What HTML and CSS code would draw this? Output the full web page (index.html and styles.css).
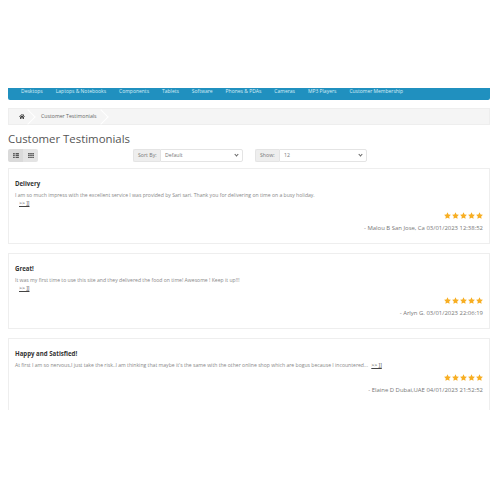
FILE: index.html
```html
<!DOCTYPE html>
<html lang="en">
<head>
    <meta charset="UTF-8">
    <title>Customer Testimonials</title>
    <link rel="stylesheet" href="styles.css">
</head>
<body>

<svg width="0" height="0" class="defs">
    <symbol id="star" viewBox="0 0 20 19">
        <path d="M10 0.5 L13 6.6 L19.7 7.5 L14.8 12.2 L16 18.8 L10 15.6 L4 18.8 L5.2 12.2 L0.3 7.5 L7 6.6 Z"/>
    </symbol>
</svg>

<div id="page">
    <div id="menu">
        <a href="#">Desktops</a>
        <a href="#">Laptops &amp; Notebooks</a>
        <a href="#">Components</a>
        <a href="#">Tablets</a>
        <a href="#">Software</a>
        <a href="#">Phones &amp; PDAs</a>
        <a href="#">Cameras</a>
        <a href="#">MP3 Players</a>
        <a href="#">Customer Membership</a>
    </div>

    <div id="breadcrumb">
        <a href="#" class="crumb crumb-home">
            <svg width="6" height="5" viewBox="0 0 14 12"><path fill="#333" d="M7 0 L9.5 2.2 V1 H11.5 V4 L14 6.2 L13 7.2 L7 2 L1 7.2 L0 6.2 Z M2.5 7.4 L7 3.5 L11.5 7.4 V12 H8.5 V8.5 H5.5 V12 H2.5 Z"/></svg>
        </a>
        <a href="#" class="crumb">Customer Testimonials</a>
    </div>

    <h1 id="title">Customer Testimonials</h1>

    <div id="toolbar">
        <div class="view-buttons">
            <button class="view-button">
                <svg width="6" height="5" viewBox="0 0 7 6"><path fill="#555" d="M0 0H2V1.5H0ZM3 0H7V1.5H3ZM0 2.2H2V3.7H0ZM3 2.2H7V3.7H3ZM0 4.4H2V5.9H0ZM3 4.4H7V5.9H3Z"/></svg>
            </button>
            <button class="view-button">
                <svg width="6" height="5" viewBox="0 0 7 6"><path fill="#555" d="M0 0H2V1.5H0ZM2.5 0H4.5V1.5H2.5ZM5 0H7V1.5H5ZM0 2.2H2V3.7H0ZM2.5 2.2H4.5V3.7H2.5ZM5 2.2H7V3.7H5ZM0 4.4H2V5.9H0ZM2.5 4.4H4.5V5.9H2.5ZM5 4.4H7V5.9H5Z"/></svg>
            </button>
        </div>
        <div class="input-group sort-group">
            <span class="input-label">Sort By:</span>
            <span class="input-select">Default <i class="chevron"></i></span>
        </div>
        <div class="input-group show-group">
            <span class="input-label">Show:</span>
            <span class="input-select">12 <i class="chevron"></i></span>
        </div>
    </div>

    <div id="reviews">
        <div class="review">
            <h4>Delivery</h4>
            <p>I am so much impress with the excellent service I was provided by Sari sari. Thank you for delivering on time on a busy holiday.</p>
            <a href="#" class="more more-block">&gt;&gt; ]]</a>
            <div class="stars">
                <svg><use href="#star"/></svg><svg><use href="#star"/></svg><svg><use href="#star"/></svg><svg><use href="#star"/></svg><svg><use href="#star"/></svg>
            </div>
            <div class="author">- Malou B San Jose, Ca 03/01/2023 12:38:52</div>
        </div>
        <div class="review">
            <h4>Great!</h4>
            <p>It was my first time to use this site and they delivered the food on time! Awesome ! Keep it up!!!</p>
            <a href="#" class="more more-block">&gt;&gt; ]]</a>
            <div class="stars">
                <svg><use href="#star"/></svg><svg><use href="#star"/></svg><svg><use href="#star"/></svg><svg><use href="#star"/></svg><svg><use href="#star"/></svg>
            </div>
            <div class="author">- Arlyn G. 03/01/2023 22:06:19</div>
        </div>
        <div class="review review-single">
            <h4>Happy and Satisfied!</h4>
            <p>At first I am so nervous,I just take the risk..I am thinking that maybe it's the same with the other online shop which are bogus because I incountered... <a href="#" class="more more-inline">&gt;&gt; ]]</a></p>
            <div class="stars">
                <svg><use href="#star"/></svg><svg><use href="#star"/></svg><svg><use href="#star"/></svg><svg><use href="#star"/></svg><svg><use href="#star"/></svg>
            </div>
            <div class="author">- Elaine D Dubai,UAE 04/01/2023 21:52:52</div>
        </div>
    </div>
</div>

</body>
</html>
```

FILE: styles.css
```css
body {
    margin: 0;
    background-color: #fff;
    font-family: "Open Sans", sans-serif;
    color: #666;
}
a {
    color: inherit;
    text-decoration: none;
}
.defs {
    position: absolute;
}
#page {
    height: 410px;
    padding: 88px 10px 0 8px;
    box-sizing: border-box;
    overflow: hidden;
}
#menu {
    display: flex;
    gap: 13px;
    height: 12px;
    padding-left: 13px;
    background-color: #2090bf;
    border-radius: 0 0 2px 2px;
    font-size: 5px;
    line-height: 6px;
    color: #d8eef7;
}
#breadcrumb {
    display: flex;
    height: 17px;
    margin-top: 8px;
    background-color: #f5f5f5;
    border: 1px solid #eee;
    box-sizing: border-box;
    font-size: 5.2px;
    line-height: 15px;
    color: #666;
}
.crumb {
    display: flex;
    align-items: center;
    padding: 0 10px 0 7px;
    position: relative;
}
.crumb-home {
    padding: 0 9px;
}
.crumb-home svg {
    margin: 0 0.5px;
}
.crumb::after {
    content: "";
    position: absolute;
    top: 2px;
    right: 0;
    width: 11px;
    height: 11px;
    border-top: 1px solid #fff;
    border-right: 1px solid #fff;
    transform: rotate(45deg) scale(0.9);
}
#title {
    margin: 6px 0 0;
    font-size: 11.4px;
    line-height: 15px;
    font-weight: 400;
    color: #555;
}
#toolbar {
    display: flex;
    align-items: flex-start;
    height: 13px;
    margin-top: 3px;
}
.view-buttons {
    display: flex;
    width: 125px;
}
.view-button {
    display: flex;
    align-items: center;
    justify-content: center;
    width: 15px;
    height: 13px;
    padding: 0;
    border: none;
    background-color: #e4e4e4;
}
.view-button:first-child {
    border-radius: 2px 0 0 2px;
    background-color: #dadada;
}
.view-button:last-child {
    border-radius: 0 2px 2px 0;
}
.input-group {
    display: flex;
    height: 13px;
    font-size: 5.2px;
    line-height: 11px;
    color: #777;
}
.input-label {
    padding-left: 4px;
    background-color: #eee;
    border: 1px solid #e4e4e4;
    border-right: none;
    border-radius: 2px 0 0 2px;
    box-sizing: border-box;
}
.sort-group .input-label {
    width: 27px;
}
.show-group .input-label {
    width: 24px;
}
.input-select {
    position: relative;
    padding-left: 4px;
    background-color: #fff;
    border: 1px solid #e4e4e4;
    border-radius: 0 2px 2px 0;
    box-sizing: border-box;
}
.sort-group .input-select {
    width: 83px;
}
.show-group {
    margin-left: 12px;
}
.show-group .input-select {
    width: 88px;
}
.chevron {
    position: absolute;
    right: 4px;
    top: 3px;
    width: 2px;
    height: 2px;
    border-right: 1px solid #666;
    border-bottom: 1px solid #666;
    transform: rotate(45deg);
}
#reviews {
    display: flex;
    flex-direction: column;
    gap: 9px;
    margin-top: 6px;
}
.review {
    height: 76px;
    padding: 10px 6px 0;
    border: 1px solid #eee;
    box-sizing: border-box;
}
.review-single {
    height: 90px;
}
.review h4 {
    margin: 0;
    font-size: 6.1px;
    line-height: 9px;
    font-weight: 700;
    color: #333;
}
.review p {
    margin: 3px 0 0;
    font-size: 5.1px;
    line-height: 8px;
    color: #888;
}
.more {
    font-size: 5.1px;
    color: #444;
    text-decoration: underline;
}
.more-block {
    display: block;
    margin: 1px 0 0 4px;
    line-height: 7px;
}
.more-inline {
    margin-left: 2px;
}
.stars {
    display: flex;
    justify-content: flex-end;
    gap: 1px;
    height: 8px;
    margin-top: 5px;
    fill: #f7ae22;
}
.stars svg {
    width: 7px;
    height: 7px;
}
.author {
    margin-top: 4px;
    font-size: 5.95px;
    line-height: 9px;
    text-align: right;
    color: #777;
}
```
